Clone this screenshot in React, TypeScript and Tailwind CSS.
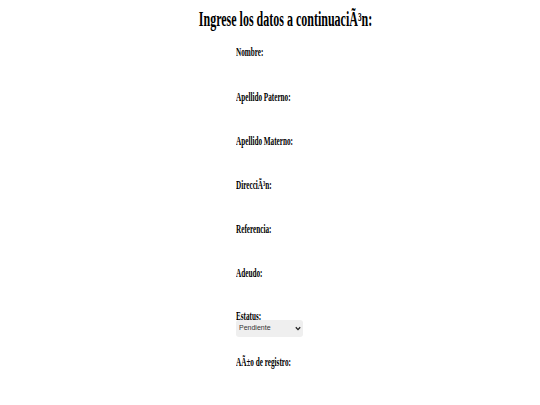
import React from "react";

const rows: { text: string; h: string }[] = [
  { text: "Nombre:", h: "h-[45px]" },
  { text: "Apellido Paterno:", h: "h-[44px]" },
  { text: "Apellido Materno:", h: "h-[44px]" },
  { text: "DirecciÃ³n:", h: "h-[44px]" },
  { text: "Referencia:", h: "h-[44px]" },
  { text: "Adeudo:", h: "h-[43px]" },
];

const Label = ({ text }: { text: string }) => (
  <span className="block origin-left scale-x-[0.6] whitespace-nowrap text-[12px] font-bold leading-[10px] text-black">
    {text}
  </span>
);

export default function App() {
  return (
    <div className="min-h-[405px] w-full bg-white font-['Liberation_Serif',serif]">
      <div className="flex justify-center pl-[30px] pt-[7px]">
        <h1 className="inline-block scale-x-[0.6] whitespace-nowrap text-[20px] font-bold leading-[24px] text-black">
          Ingrese los datos a continuaciÃ³n:
        </h1>
      </div>
      <form className="mt-[16px] flex flex-col pl-[236px]">
        {rows.map((r) => (
          <div key={r.text} className={r.h}>
            <Label text={r.text} />
          </div>
        ))}
        <div className="flex h-[46px] flex-col">
          <Label text="Estatus:" />
          <div className="relative mt-[-1px] h-[17px] w-[67px]">
            <select className="block h-full w-full appearance-none rounded-[3px] bg-[#efefef] pl-[3px] font-['Liberation_Sans',sans-serif] text-[7px] text-[#333] outline-none">
              <option>Pendiente</option>
            </select>
            <svg
              className="pointer-events-none absolute right-[2px] top-[6px]"
              width="6"
              height="5"
              viewBox="0 0 6 5"
              fill="none"
            >
              <path d="M0.8 1.2 L3 3.6 L5.2 1.2" stroke="#222" strokeWidth="1.3" />
            </svg>
          </div>
        </div>
        <div>
          <Label text="AÃ±o de registro:" />
        </div>
      </form>
    </div>
  );
}
